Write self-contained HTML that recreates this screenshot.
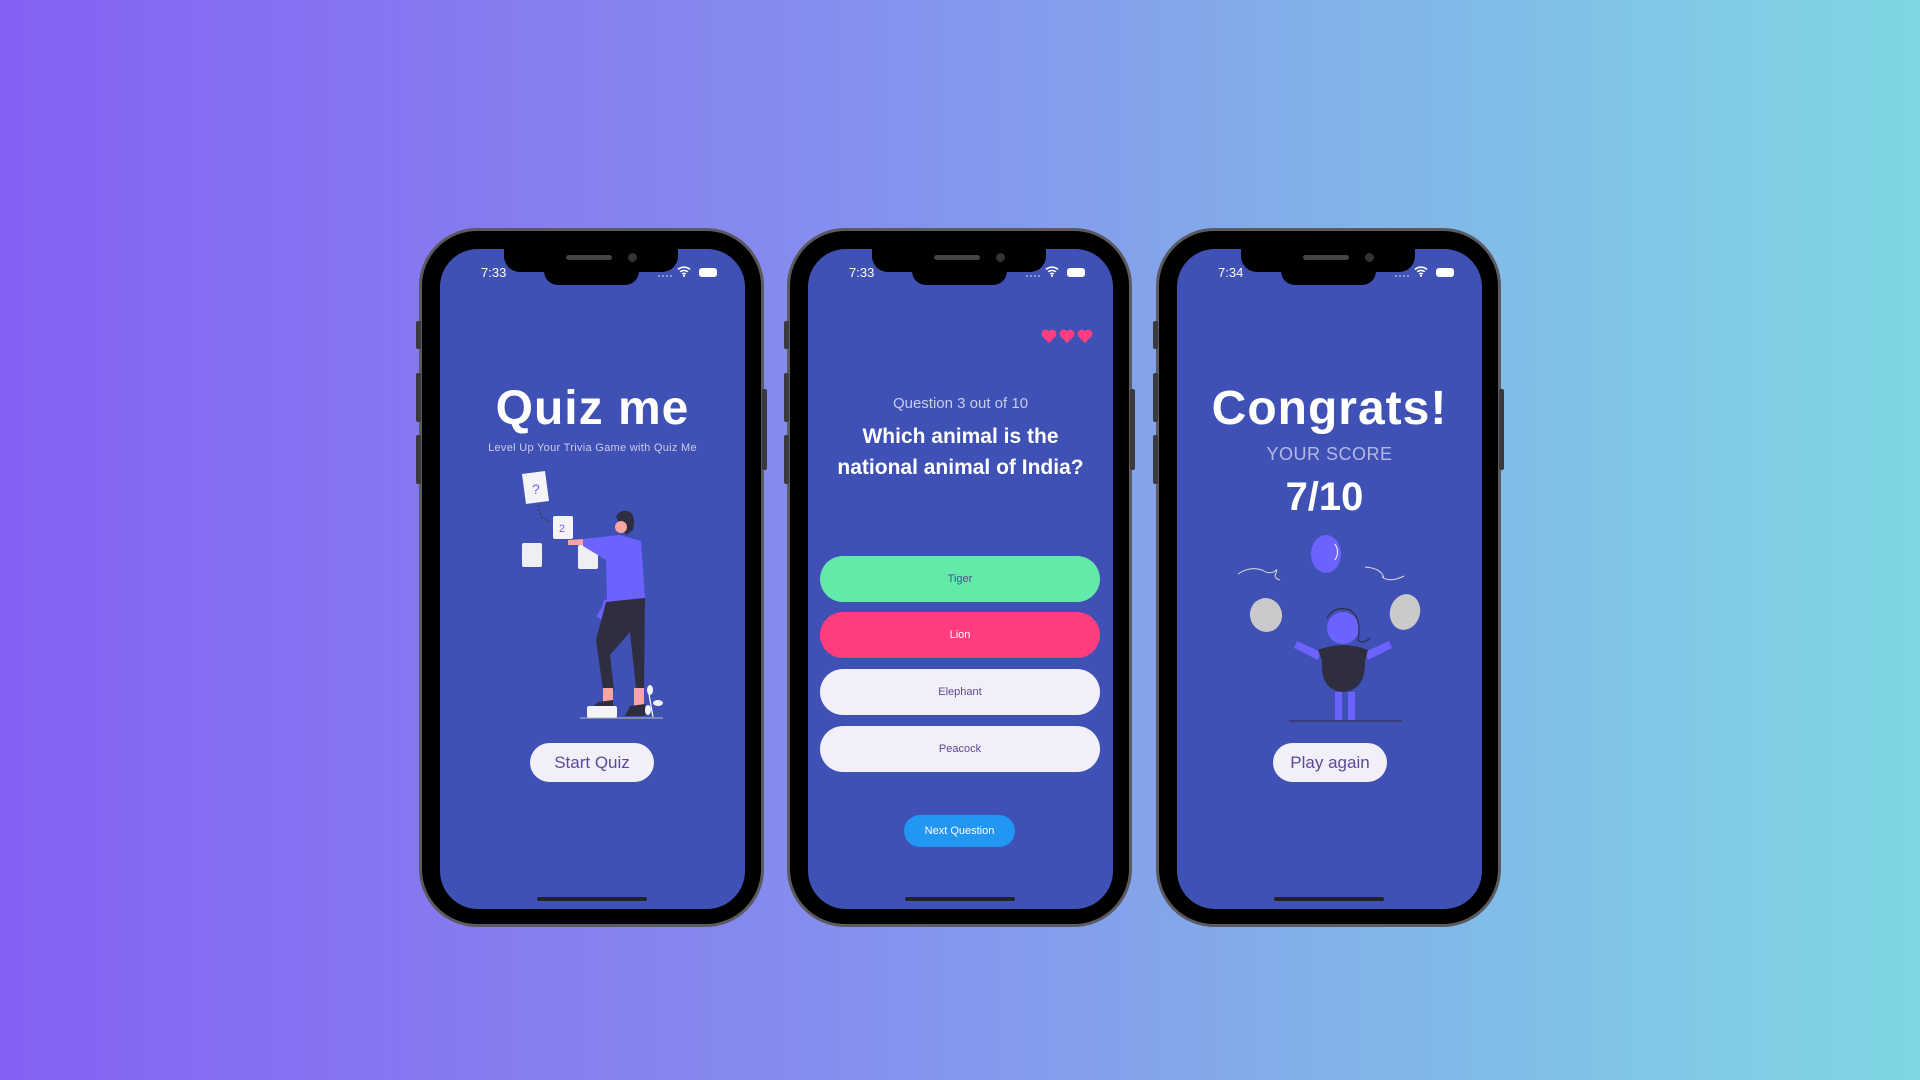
<!DOCTYPE html>
<html><head><meta charset="utf-8"><style>
*{margin:0;padding:0;box-sizing:border-box}
body{width:1920px;height:1080px;overflow:hidden;position:relative;background:linear-gradient(90deg,#8561f3 0%,#8590ee 45%,#80c6e6 85%,#7fd6e3 100%);font-family:"Liberation Sans",sans-serif}
.ph{position:absolute;top:228px;width:345px;height:699px;border-radius:58px;background:#000;border:3px solid #5a5a5f}
.btn{position:absolute;background:#3a3a3e;width:5px;border-radius:2px}
.scr{position:absolute;left:18px;top:18px;width:305px;height:660px;border-radius:38px;background:#3f51b5;overflow:hidden}
.notch{position:absolute;left:82px;top:0;width:174px;height:41px;background:#000;border-radius:0 0 16px 16px}
.notch2{position:absolute;left:122px;top:36px;width:95px;height:18px;background:#000;border-radius:0 0 14px 14px}
.spk{position:absolute;left:144px;top:24px;width:46px;height:5px;border-radius:3px;background:#444}
.cam{position:absolute;left:206px;top:22px;width:9px;height:9px;border-radius:50%;background:#333}
.time{position:absolute;left:41px;top:16px;color:#fff;font-size:13px}
.sig{position:absolute;left:218px;top:26px;width:14px;height:2px;border-top:2px dotted #8c96d0;z-index:5}
.wifi{position:absolute;left:237px;top:16px}
.bat{position:absolute;left:259px;top:19px;width:18px;height:9px;border-radius:3px;background:#fff}
.home{position:absolute;left:97px;bottom:8px;width:110px;height:4px;border-radius:2px;background:#222}
.c{position:absolute;left:0;width:305px;text-align:center;color:#fff}
.pill{position:absolute;border-radius:22px;background:#f3eff8;color:#5a4a9c;text-align:center}
.ans{position:absolute;left:12px;width:280px;height:46px;border-radius:23px;font-size:11px;line-height:46px;text-align:center;color:#5b4a8e}
</style></head><body>

<div class="ph" style="left:419px">
 <div class="scr">
  <div class="time">7:33</div><div class="sig"></div>
  <svg class="wifi" width="14" height="12" viewBox="0 0 14 12"><path d="M1 4.5a9 9 0 0 1 12 0M3.2 6.8a6 6 0 0 1 7.6 0M5.3 9a3 3 0 0 1 3.4 0" stroke="#fff" stroke-width="1.6" fill="none"/><circle cx="7" cy="10.8" r="1.1" fill="#fff"/></svg>
  <div class="bat"></div>
  <div class="c" style="top:132px;font-size:48px;font-weight:bold;letter-spacing:1px">Quiz me</div>
  <div class="c" style="top:193px;font-size:11px;color:#c8cde8;letter-spacing:.3px">Level Up Your Trivia Game with Quiz Me</div>
  <div class="pill" style="left:90px;top:494px;width:124px;height:39px;line-height:39px;font-size:17px">Start Quiz</div>
  <div class="home"></div>
 </div>
 <div class="notch"></div><div class="notch2"></div><div class="spk"></div><div class="cam"></div>
</div>
<div class="btn" style="left:416px;top:321px;height:28px"></div>
<div class="btn" style="left:416px;top:373px;height:49px"></div>
<div class="btn" style="left:416px;top:435px;height:49px"></div>
<div class="btn" style="left:762px;top:389px;height:81px"></div>

<div class="ph" style="left:787px">
 <div class="scr">
  <div class="time">7:33</div><div class="sig"></div>
  <svg class="wifi" width="14" height="12" viewBox="0 0 14 12"><path d="M1 4.5a9 9 0 0 1 12 0M3.2 6.8a6 6 0 0 1 7.6 0M5.3 9a3 3 0 0 1 3.4 0" stroke="#fff" stroke-width="1.6" fill="none"/><circle cx="7" cy="10.8" r="1.1" fill="#fff"/></svg>
  <div class="bat"></div>
  <svg style="position:absolute;left:233px;top:79px" width="55" height="16" viewBox="0 0 55 16">
   <g fill="#ff3d7f"><path id="h" d="M8 15L1.5 8.5A4 4 0 0 1 8 3.2A4 4 0 0 1 14.5 8.5Z"/><use href="#h" x="18"/><use href="#h" x="36"/></g>
  </svg>
  <div class="c" style="top:146px;font-size:15px;color:#c8cde8">Question 3 out of 10</div>
  <div class="c" style="top:172px;font-size:21px;font-weight:bold;line-height:31px">Which animal is the<br>national animal of India?</div>
  <div class="ans" style="top:307px;background:#63eaa9">Tiger</div>
  <div class="ans" style="top:363px;background:#ff3d7f;color:#fff">Lion</div>
  <div class="ans" style="top:420px;background:#f3eff8">Elephant</div>
  <div class="ans" style="top:477px;background:#f3eff8">Peacock</div>
  <div style="position:absolute;left:96px;top:566px;width:111px;height:32px;border-radius:16px;background:#2196f3;color:#fff;font-size:11px;line-height:32px;text-align:center">Next Question</div>
  <div class="home"></div>
 </div>
 <div class="notch"></div><div class="notch2"></div><div class="spk"></div><div class="cam"></div>
</div>
<div class="btn" style="left:784px;top:321px;height:28px"></div>
<div class="btn" style="left:784px;top:373px;height:49px"></div>
<div class="btn" style="left:784px;top:435px;height:49px"></div>
<div class="btn" style="left:1130px;top:389px;height:81px"></div>

<div class="ph" style="left:1156px">
 <div class="scr">
  <div class="time">7:34</div><div class="sig"></div>
  <svg class="wifi" width="14" height="12" viewBox="0 0 14 12"><path d="M1 4.5a9 9 0 0 1 12 0M3.2 6.8a6 6 0 0 1 7.6 0M5.3 9a3 3 0 0 1 3.4 0" stroke="#fff" stroke-width="1.6" fill="none"/><circle cx="7" cy="10.8" r="1.1" fill="#fff"/></svg>
  <div class="bat"></div>
  <div class="c" style="top:132px;font-size:48px;font-weight:bold;letter-spacing:1px">Congrats!</div>
  <div class="c" style="top:195px;font-size:18px;color:#b3bae6;letter-spacing:.5px">YOUR SCORE</div>
  <div class="c" style="top:226px;font-size:40px;font-weight:bold;left:-5px">7/10</div>
  <div class="pill" style="left:96px;top:494px;width:114px;height:39px;line-height:39px;font-size:17px">Play again</div>
  <div class="home"></div>
 </div>
 <div class="notch"></div><div class="notch2"></div><div class="spk"></div><div class="cam"></div>
</div>
<div class="btn" style="left:1153px;top:321px;height:28px"></div>
<div class="btn" style="left:1153px;top:373px;height:49px"></div>
<div class="btn" style="left:1153px;top:435px;height:49px"></div>
<div class="btn" style="left:1499px;top:389px;height:81px"></div>

<svg style="position:absolute;left:0;top:0" width="1920" height="1080">
 <g>
  <path d="M522 474 L545 471 L549 501 L526 504 Z" fill="#f3f3f8"/>
  <text x="532" y="494" font-size="14" fill="#6c63ff" font-family="Liberation Sans">?</text>
  <path d="M538 505 Q540 520 550 522" stroke="#333" stroke-width="1" stroke-dasharray="2 2" fill="none"/>
  <rect x="553" y="516" width="20" height="23" rx="2" fill="#f3f3f8"/>
  <text x="559" y="532" font-size="11" fill="#6c63ff" font-family="Liberation Sans">2</text>
  <rect x="522" y="543" width="20" height="24" rx="2" fill="#eeeef4"/>
  <rect x="578" y="545" width="20" height="24" rx="2" fill="#eeeef4"/>
  <path d="M616 517 Q620 508 630 512 Q636 516 633 530 L626 535 Z" fill="#2f2e41"/>
  <circle cx="621" cy="527" r="6" fill="#f9a3a3"/>
  <path d="M568 540 L585 539 L585 545 L568 545 Z" fill="#f9a3a3"/>
  <path d="M583 539 L620 535 L641 541 L645 598 L607 602 L606 560 L583 546 Z" fill="#6c63ff"/>
  <path d="M607 600 L605 608 L599 618" stroke="#6c63ff" stroke-width="6" fill="none"/>
  <path d="M606 602 L645 598 L644 688 L636 688 L630 632 L610 655 L614 690 L603 690 L596 640 Z" fill="#2f2e41"/>
  <rect x="603" y="688" width="10" height="14" fill="#f9a3a3"/>
  <rect x="634" y="688" width="10" height="18" fill="#f9a3a3"/>
  <path d="M598 702 L613 700 L613 708 L592 708 Z" fill="#2f2e41"/>
  <path d="M630 706 L645 704 L645 716 L625 716 Z" fill="#2f2e41"/>
  <rect x="587" y="706" width="30" height="12" rx="2" fill="#f3f3f8"/>
  <line x1="580" y1="718" x2="663" y2="718" stroke="#bbb" stroke-width="1"/>
  <path d="M653 717 Q650 700 648 688" stroke="#fff" stroke-width="1.2" fill="none"/>
  <ellipse cx="650" cy="690" rx="3" ry="5" fill="#f3f3f8"/><ellipse cx="658" cy="703" rx="5" ry="3" fill="#f3f3f8"/><ellipse cx="648" cy="710" rx="3" ry="5" fill="#f3f3f8"/>
 </g>
 <g>
  <path d="M1238 574 Q1250 566 1262 570 Q1270 575 1275 571 Q1278 568 1276 573 Q1273 578 1280 580" stroke="#ddd" stroke-width="1" fill="none"/>
  <path d="M1365 567 Q1378 568 1382 574 Q1385 578 1382 577 Q1390 583 1404 576" stroke="#ddd" stroke-width="1" fill="none"/>
  <ellipse cx="1326" cy="554" rx="15" ry="19" fill="#6c63ff"/><path d="M1335 544 Q1340 552 1335 560" stroke="#fff" stroke-width="1" fill="none"/>
  <ellipse cx="1266" cy="615" rx="16" ry="17" fill="#cacaca" transform="rotate(-15 1266 615)"/>
  <ellipse cx="1405" cy="612" rx="15" ry="18" fill="#cacaca" transform="rotate(15 1405 612)"/>
  <path d="M1297 641 L1321 652 L1318 660 L1294 648 Z" fill="#6c63ff"/>
  <path d="M1389 641 L1365 652 L1368 660 L1392 648 Z" fill="#6c63ff"/>
  <path d="M1318 650 Q1343 640 1368 650 L1365 661 Q1366 690 1343 692 Q1320 690 1322 661 Z" fill="#2f2e41"/>
  <circle cx="1343" cy="628" r="16" fill="#6c63ff"/>
  <path d="M1327 618 Q1335 605 1350 610 Q1362 618 1358 640 Q1362 645 1370 638" stroke="#2f2e41" stroke-width="1.2" fill="none"/>
  <rect x="1335" y="692" width="7" height="28" fill="#6c63ff"/><rect x="1348" y="692" width="7" height="28" fill="#6c63ff"/>
  <line x1="1289" y1="721" x2="1402" y2="721" stroke="#2f2e41" stroke-width="1"/>
 </g>
</svg>
</body></html>
